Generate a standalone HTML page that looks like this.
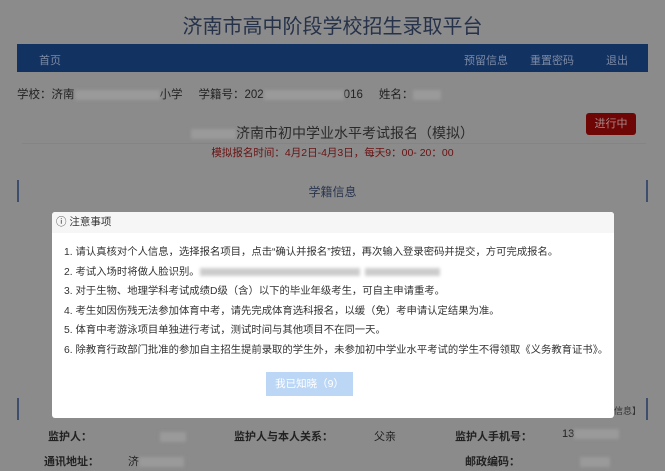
<!DOCTYPE html>
<html><head><meta charset="utf-8"><style>
*{margin:0;padding:0;box-sizing:border-box}
body{width:665px;height:467px;overflow:hidden;background:#8b8b8b;font-family:"Liberation Sans","Noto Sans CJK SC",sans-serif;position:relative;color:#222}
.a{position:absolute;white-space:nowrap}
.blur{display:inline-block;background:#9a9a9a;height:10px;vertical-align:middle;filter:blur(1.5px)}
</style></head><body>
<div class="a" style="left:0;top:10px;width:665px;text-align:center;font-size:20px;color:#26324a">济南市高中阶段学校招生录取平台</div>
<div class="a" style="left:17px;top:44px;width:631px;height:28px;background:#123262"></div>
<div class="a" style="left:39px;top:52px;font-size:11px;color:#7d8aa3">首页</div>
<div class="a" style="left:464px;top:52px;font-size:11px;color:#7d8aa3">预留信息</div>
<div class="a" style="left:530px;top:52px;font-size:11px;color:#7d8aa3">重置密码</div>
<div class="a" style="left:606px;top:52px;font-size:11px;color:#7d8aa3">退出</div>
<div class="a" style="left:17px;top:86px;font-size:11.5px;color:#222">学校：济南<span class="blur" style="width:85px"></span>小学&nbsp;&nbsp;&nbsp;&nbsp;&nbsp;学籍号：202<span class="blur" style="width:80px"></span>016&nbsp;&nbsp;&nbsp;&nbsp;&nbsp;姓名：<span class="blur" style="width:28px"></span></div>
<div class="a" style="left:22px;top:143px;width:624px;height:1px;background:#848484"></div>
<div class="a" style="left:0;top:123px;width:665px;text-align:center;font-size:14px;color:#2a2a2a"><span class="blur" style="width:45px"></span>济南市初中学业水平考试报名（模拟）</div>
<div class="a" style="left:0;top:145px;width:665px;text-align:center;font-size:10.5px;color:#6a1212">模拟报名时间：4月2日-4月3日，每天9：00- 20：00</div>
<div class="a" style="left:586px;top:113px;width:50px;height:22px;background:#6e0606;border-radius:3px;color:#a88;font-size:11px;text-align:center;line-height:22px">进行中</div>
<div class="a" style="left:17px;top:180px;width:2px;height:22px;background:#3c4d6e"></div>
<div class="a" style="left:646px;top:180px;width:2px;height:22px;background:#3c4d6e"></div>
<div class="a" style="left:0;top:183px;width:665px;text-align:center;font-size:12px;color:#2a3550">学籍信息</div>
<div class="a" style="left:17px;top:398px;width:2px;height:22px;background:#3c4d6e"></div>
<div class="a" style="left:646px;top:398px;width:2px;height:22px;background:#3c4d6e"></div>
<div class="a" style="left:614px;top:404px;font-size:9px;color:#333">信息】</div>
<div class="a" style="left:48px;top:428px;font-size:11px;font-weight:bold;color:#222">监护人：</div>
<div class="a" style="left:160px;top:428px"><span class="blur" style="width:26px"></span></div>
<div class="a" style="left:234px;top:428px;font-size:11px;font-weight:bold;color:#222">监护人与本人关系：</div>
<div class="a" style="left:374px;top:428px;font-size:11px;color:#222">父亲</div>
<div class="a" style="left:455px;top:428px;font-size:11px;font-weight:bold;color:#222">监护人手机号：</div>
<div class="a" style="left:562px;top:428px;font-size:11px;color:#222">13<span class="blur" style="width:45px"></span></div>
<div class="a" style="left:44px;top:453px;font-size:11px;font-weight:bold;color:#222">通讯地址：</div>
<div class="a" style="left:128px;top:453px;font-size:11px;color:#222">济<span class="blur" style="width:45px"></span></div>
<div class="a" style="left:465px;top:453px;font-size:11px;font-weight:bold;color:#222">邮政编码：</div>
<div class="a" style="left:580px;top:453px"><span class="blur" style="width:30px"></span></div>
<div class="a" style="left:52px;top:212px;width:562px;height:206px;background:#fff;border-radius:3px;overflow:hidden">
<div style="height:21px;background:#f6f6f6;font-size:10.5px;color:#333;line-height:21px;padding-left:4px">ⓘ 注意事项</div>
<div style="padding:10px 0 0 12px;font-size:10.35px;color:#333;line-height:19.6px">
<div>1. 请认真核对个人信息，选择报名项目，点击“确认并报名”按钮，再次输入登录密码并提交，方可完成报名。</div>
<div>2. 考试入场时将做人脸识别。<span class="blur" style="width:160px;background:#ccc;height:8px"></span>&nbsp;&nbsp;<span class="blur" style="width:75px;background:#ccc;height:8px"></span></div>
<div>3. 对于生物、地理学科考试成绩D级（含）以下的毕业年级考生，可自主申请重考。</div>
<div>4. 考生如因伤残无法参加体育中考，请先完成体育选科报名，以缓（免）考申请认定结果为准。</div>
<div>5. 体育中考游泳项目单独进行考试，测试时间与其他项目不在同一天。</div>
<div>6. 除教育行政部门批准的参加自主招生提前录取的学生外，未参加初中学业水平考试的学生不得领取《义务教育证书》。</div>
</div>
<div style="position:absolute;left:214px;top:160px;width:87px;height:24px;background:#bcd7f6;color:#fff;font-size:10.5px;text-align:center;line-height:24px">我已知晓（9）</div>
</div>
</body></html>
